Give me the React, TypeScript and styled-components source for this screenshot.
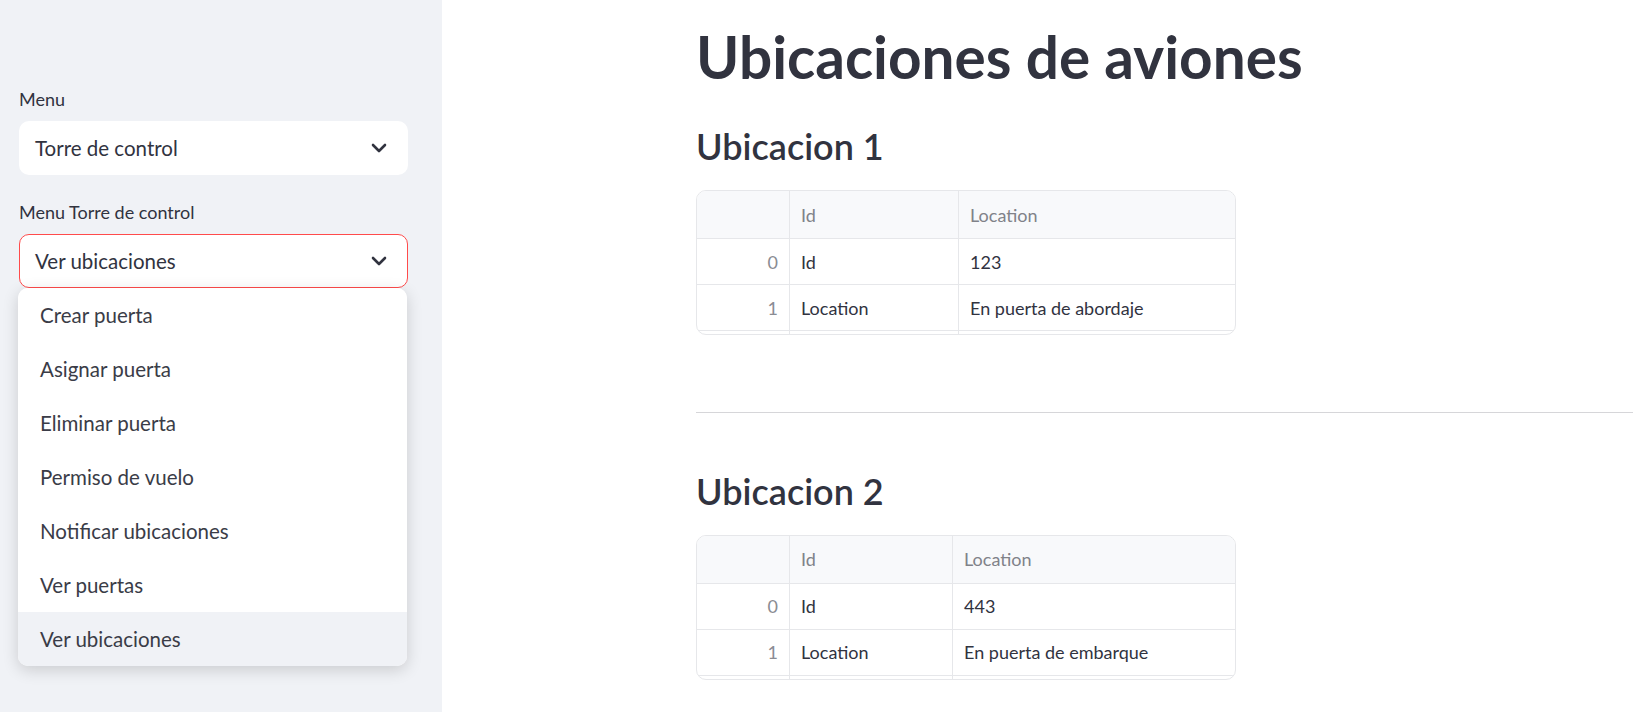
import React from "react";
import styled, { createGlobalStyle } from "styled-components";

const GlobalStyle = createGlobalStyle`
  html, body {
    margin: 0;
    padding: 0;
    background: #ffffff;
    font-family: Lato, "Noto Sans", "Liberation Sans", sans-serif;
    color: #31333f;
  }
  * { box-sizing: border-box; }
`;

const Page = styled.div`
  display: flex;
  width: 100%;
  height: 712px;
  overflow: hidden;
`;

const Sidebar = styled.aside`
  width: 442px;
  flex: 0 0 442px;
  background: #f0f2f6;
  padding: 87px 34px 0 19px;
  display: flex;
  flex-direction: column;
  gap: 25px;
`;

const Field = styled.div`
  display: flex;
  flex-direction: column;
`;

const Label = styled.label`
  font-size: 18px;
  line-height: 25px;
  height: 25px;
  margin-bottom: 9px;
  color: #31333f;
`;

const SelectWrap = styled.div`
  position: relative;
`;

const SelectBox = styled.div<{ $focused?: boolean }>`
  height: 54px;
  display: flex;
  align-items: center;
  justify-content: space-between;
  padding: 0 21px 0 15px;
  background: #ffffff;
  border: 1px solid ${(p) => (p.$focused ? "#ff4b4b" : "transparent")};
  border-radius: 10px;
  font-size: 20.5px;
  color: #31333f;
`;

const ChevronSvg = styled.svg`
  width: 16px;
  height: 10px;
  flex: 0 0 auto;
  margin-right: -1px;
`;

const Chevron = () => (
  <ChevronSvg viewBox="0 0 16 10" aria-hidden="true">
    <polyline
      points="2,2 8,8 14,2"
      fill="none"
      stroke="#31333f"
      strokeWidth="2.6"
      strokeLinecap="round"
      strokeLinejoin="round"
    />
  </ChevronSvg>
);

const Menu = styled.ul`
  position: absolute;
  top: 100%;
  left: -1px;
  width: 389px;
  margin: 0;
  padding: 0;
  list-style: none;
  background: #ffffff;
  border-radius: 10px;
  overflow: hidden;
  box-shadow: 0 4px 16px rgba(0, 0, 0, 0.16);
  z-index: 10;
`;

const MenuItem = styled.li<{ $active?: boolean }>`
  height: 54px;
  display: flex;
  align-items: center;
  padding-left: 22px;
  font-size: 20.5px;
  color: #3a3c47;
  background: ${(p) => (p.$active ? "#f0f2f6" : "#ffffff")};
`;

const Main = styled.main`
  flex: 1;
  min-width: 0;
  padding-left: 254px;
  display: flex;
  flex-direction: column;
`;

const Title = styled.h1`
  margin: 21px 0 0;
  font-size: 58.5px;
  line-height: 1.2;
  font-weight: 700;
  color: #31333f;
  white-space: nowrap;
`;

const Subheader = styled.h3<{ $top: number }>`
  margin: ${(p) => p.$top}px 0 0;
  font-size: 36px;
  line-height: 1.2;
  font-weight: 600;
  color: #31333f;
`;

const Table = styled.div<{ $cols: string; $top: number }>`
  margin-top: ${(p) => p.$top}px;
  display: grid;
  grid-template-columns: ${(p) => p.$cols};
  width: max-content;
  border: 1px solid #e6e7ea;
  border-radius: 10px;
  overflow: hidden;
  font-size: 18px;
`;

const HeadCell = styled.div`
  height: 48px;
  display: flex;
  align-items: center;
  padding: 0 11px;
  background: #f8f9fb;
  color: #808289;
  border-bottom: 1px solid #e6e7ea;
  border-right: 1px solid #e6e7ea;
  &:nth-child(3n) { border-right: none; }
`;

const Cell = styled.div<{ $index?: boolean }>`
  height: 46px;
  display: flex;
  align-items: center;
  justify-content: ${(p) => (p.$index ? "flex-end" : "flex-start")};
  padding: 0 11px;
  color: ${(p) => (p.$index ? "#8a8c93" : "#31333f")};
  border-bottom: 1px solid #e6e7ea;
  border-right: 1px solid #e6e7ea;
  &:nth-child(3n) { border-right: none; }
`;

const Filler = styled.div`
  height: 3px;
  border-right: 1px solid #e6e7ea;
  &:nth-child(3n) { border-right: none; }
`;

const Divider = styled.hr`
  margin: 77px 0 0;
  border: none;
  height: 1px;
  background: #d6d6d9;
  width: 100%;
`;

type Row = [string, string, string];

const DataTable = ({ rows, cols, top }: { rows: Row[]; cols: string; top: number }) => (
  <Table $cols={cols} $top={top}>
    <HeadCell />
    <HeadCell>Id</HeadCell>
    <HeadCell>Location</HeadCell>
    {rows.map((r) => (
      <React.Fragment key={r[0]}>
        <Cell $index>{r[0]}</Cell>
        <Cell>{r[1]}</Cell>
        <Cell>{r[2]}</Cell>
      </React.Fragment>
    ))}
    <Filler />
    <Filler />
    <Filler />
  </Table>
);

const options = [
  "Crear puerta",
  "Asignar puerta",
  "Eliminar puerta",
  "Permiso de vuelo",
  "Notificar ubicaciones",
  "Ver puertas",
  "Ver ubicaciones",
];

export default function App() {
  return (
    <>
      <GlobalStyle />
      <Page>
        <Sidebar>
          <Field>
            <Label>Menu</Label>
            <SelectBox>
              <span>Torre de control</span>
              <Chevron />
            </SelectBox>
          </Field>
          <Field>
            <Label>Menu Torre de control</Label>
            <SelectWrap>
              <SelectBox $focused>
                <span>Ver ubicaciones</span>
                <Chevron />
              </SelectBox>
              <Menu>
                {options.map((o) => (
                  <MenuItem key={o} $active={o === "Ver ubicaciones"}>
                    {o}
                  </MenuItem>
                ))}
              </Menu>
            </SelectWrap>
          </Field>
        </Sidebar>
        <Main>
          <Title>Ubicaciones de aviones</Title>
          <Subheader $top={34}>Ubicacion 1</Subheader>
          <DataTable
            top={22}
            cols="93px 169px 276px"
            rows={[
              ["0", "Id", "123"],
              ["1", "Location", "En puerta de abordaje"],
            ]}
          />
          <Divider />
          <Subheader $top={57}>Ubicacion 2</Subheader>
          <DataTable
            top={21}
            cols="93px 163px 282px"
            rows={[
              ["0", "Id", "443"],
              ["1", "Location", "En puerta de embarque"],
            ]}
          />
        </Main>
      </Page>
    </>
  );
}
